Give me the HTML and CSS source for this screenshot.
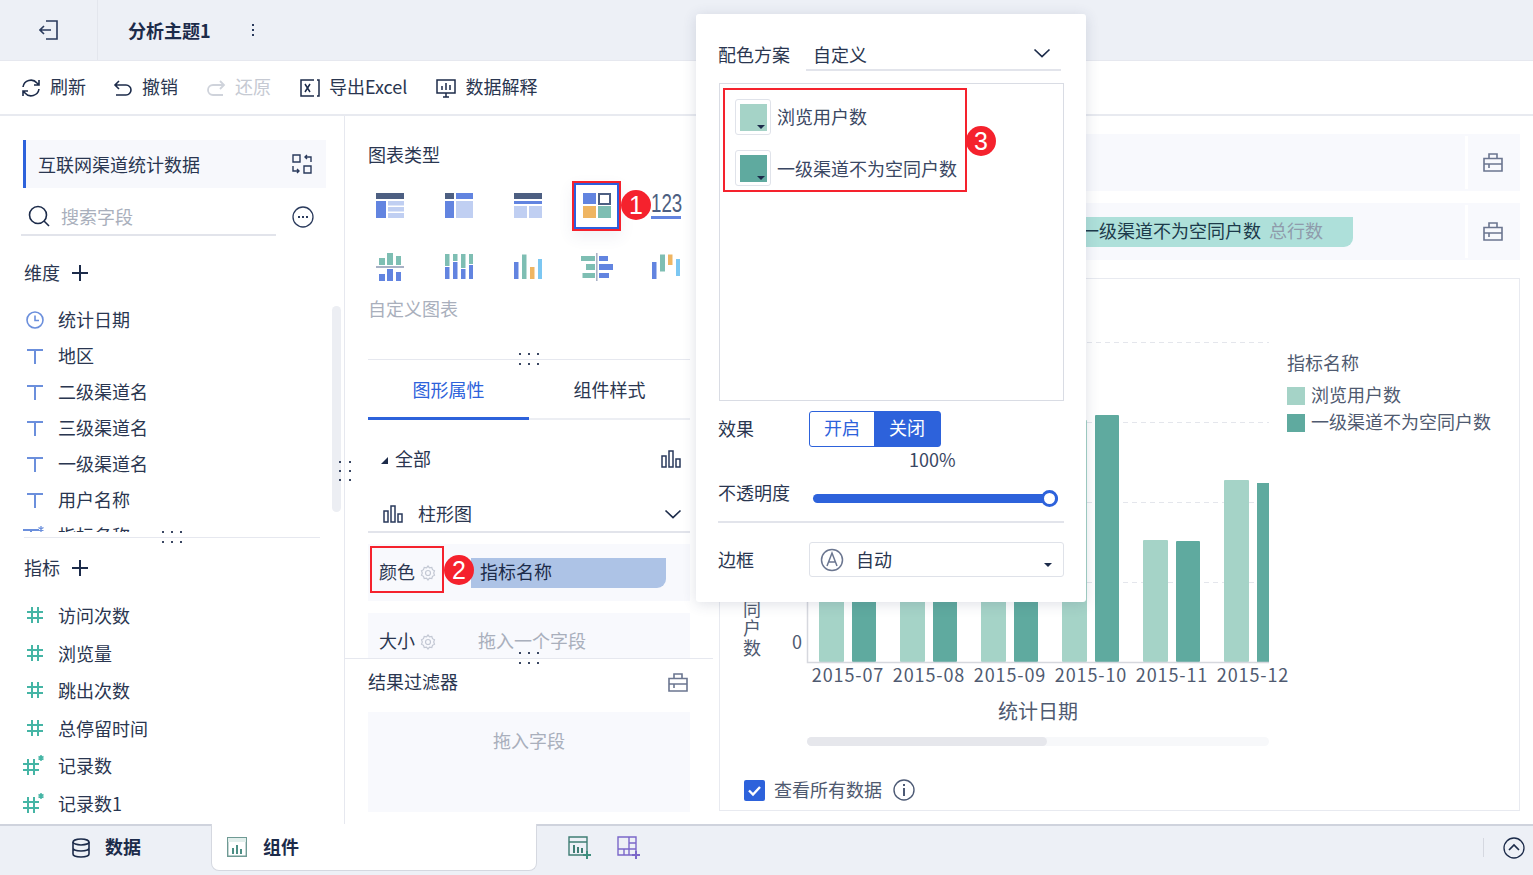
FILE: index.html
```html
<!DOCTYPE html>
<html lang="zh-CN">
<head>
<meta charset="utf-8">
<title>分析主题1</title>
<link rel="stylesheet" href="styles.css">
</head>
<body>
<svg class="defs" aria-hidden="true">
  <symbol id="i-t" viewBox="0 0 18 18"><path d="M1 3h16M9 3v14" fill="none" stroke="#6b8fdc" stroke-width="2"/></symbol>
  <symbol id="i-tx" viewBox="0 0 22 20"><path d="M0 4h16M8 4v16" fill="none" stroke="#6b8fdc" stroke-width="2"/><path d="M18 0v6M15.500 1.500l5 3M20.500 1.500l-5 3" fill="none" stroke="#6b8fdc" stroke-width="1.300"/></symbol>
  <symbol id="i-hash" viewBox="0 0 18 18"><path d="M6 1v16M12 1v16M1 6h16M1 12h16" fill="none" stroke="#45b5a5" stroke-width="2"/></symbol>
  <symbol id="i-hashx" viewBox="0 0 22 20"><path d="M5 4v16M11 4v16M0 9h16M0 15h16" fill="none" stroke="#45b5a5" stroke-width="2"/><path d="M18 0v6M15.500 1.500l5 3M20.500 1.500l-5 3" fill="none" stroke="#45b5a5" stroke-width="1.500"/></symbol>
  <symbol id="i-plus" viewBox="0 0 16 16"><path d="M0 8h16M8 0v16" fill="none" stroke="#1c2b4a" stroke-width="2"/></symbol>
  <symbol id="i-box" viewBox="0 0 20 19"><path d="M1 5.500h18v12.500H1zM6 5.500V1h8v4.500M1 11h18M6 11v4" fill="none" stroke="#6b7690" stroke-width="1.600"/></symbol>
  <symbol id="i-bars" viewBox="0 0 20 18"><path d="M1 6h4v11H1zM8 1h4v16H8zM15 9h4v8h-4z" fill="none" stroke="#2a3a5c" stroke-width="1.500"/></symbol>
  <symbol id="i-gear" viewBox="0 0 16 16"><path d="M8 1l1.500 1.800 2.300-.3.700 2.200 2 1.100-.8 2.200.8 2.200-2 1.100-.7 2.200-2.300-.3L8 15l-1.500-1.800-2.300.3-.7-2.200-2-1.100.8-2.200-.8-2.200 2-1.100.7-2.200 2.300.3z" fill="none" stroke="#c3c8d4" stroke-width="1.200"/><circle cx="8" cy="8" r="2.500" fill="none" stroke="#c3c8d4" stroke-width="1.200"/></symbol>
  <symbol id="i-chev" viewBox="0 0 18 10"><path d="M1.500 1.500L9 8.500l7.500-7" fill="none" stroke="#1c2b4a" stroke-width="1.700"/></symbol>
  <symbol id="i-dots" viewBox="0 0 22 12"><path d="M1 0h2v2H1zM10 0h2v2h-2zM19 0h2v2h-2zM1 10h2v2H1zM10 10h2v2h-2zM19 10h2v2h-2z" fill="#3a4763"/></symbol>
</svg>

<header class="topbar">
  <div class="back">
    <svg class="ico-back" viewBox="0 0 20 20"><path d="M7 1h11v18H7M1 10h11M5 6l-4 4 4 4" fill="none" stroke="#2a3a5c" stroke-width="1.600"/></svg>
  </div>
  <div class="title">分析主题1</div>
  <svg class="ico-more" viewBox="0 0 4 12"><path d="M1 0h2v2H1zM1 5h2v2H1zM1 10h2v2H1z" fill="#2a3a5c"/></svg>
</header>

<nav class="toolbar">
  <div class="tool">
    <svg class="ico-tool" viewBox="0 0 20 20"><path d="M2 9a8 8 0 0 1 14-4l2 2M18 11a8 8 0 0 1-14 4l-2-2M18 2v5h-5M2 18v-5h5" fill="none" stroke="#1c2b4a" stroke-width="1.600"/></svg><span>刷新</span>
  </div>
  <div class="tool">
    <svg class="ico-tool" viewBox="0 0 20 20"><path d="M6 3L2 7l4 4M2 7h11a5 5 0 0 1 0 10H3" fill="none" stroke="#1c2b4a" stroke-width="1.600"/></svg><span>撤销</span>
  </div>
  <div class="tool tool-off">
    <svg class="ico-tool" viewBox="0 0 20 20"><path d="M14 3l4 4-4 4M18 7H7a5 5 0 0 0 0 10h10" fill="none" stroke="#cfd3db" stroke-width="1.800"/></svg><span>还原</span>
  </div>
  <div class="tool tool-xl">
    <svg class="ico-tool" viewBox="0 0 20 20"><path d="M14 2H1v16h13M17 2h2v16h-2M5 6l5 8M10 6l-5 8" fill="none" stroke="#1c2b4a" stroke-width="1.500"/></svg><span>导出Excel</span>
  </div>
  <div class="tool">
    <svg class="ico-tool" viewBox="0 0 20 20"><path d="M1 2h18v13H1zM7 19h6M10 15v4M6 8v4M10 5v7M14 7v5" fill="none" stroke="#1c2b4a" stroke-width="1.500"/></svg><span>数据解释</span>
  </div>
</nav>

<main class="main">
  <aside class="left">
    <div class="dataset">
      <span>互联网渠道统计数据</span>
      <svg class="ico-swap" viewBox="0 0 20 20"><path d="M1 1h7v7H1zM12 12h7v7h-7zM1 12v5h6M5 15l2 2-2 2M19 8V3h-6M15 5l-2-2 2-2" fill="none" stroke="#2a3a5c" stroke-width="1.400"/></svg>
    </div>
    <div class="search">
      <div class="search-box">
        <svg class="ico-search" viewBox="0 0 22 22"><circle cx="10" cy="10" r="8.500" fill="none" stroke="#1c2b4a" stroke-width="1.600"/><path d="M16 16l5 5" stroke="#1c2b4a" stroke-width="1.600"/></svg>
        <span>搜索字段</span>
      </div>
      <svg class="ico-ell" viewBox="0 0 22 22"><circle cx="11" cy="11" r="10" fill="none" stroke="#2a3a5c" stroke-width="1.300"/><path d="M6 10h2v2H6zM10 10h2v2h-2zM14 10h2v2h-2z" fill="#2a3a5c"/></svg>
    </div>
    <div class="sec-head"><span>维度</span><svg class="ico-plus"><use href="#i-plus"/></svg></div>
    <div class="dim-list">
      <div class="row"><svg class="ico-f" viewBox="0 0 18 18"><circle cx="9" cy="9" r="8" fill="none" stroke="#6b8fdc" stroke-width="1.600"/><path d="M9 4.500V9.500h4" fill="none" stroke="#6b8fdc" stroke-width="1.600"/></svg><span>统计日期</span></div>
      <div class="row"><svg class="ico-f"><use href="#i-t"/></svg><span>地区</span></div>
      <div class="row"><svg class="ico-f"><use href="#i-t"/></svg><span>二级渠道名</span></div>
      <div class="row"><svg class="ico-f"><use href="#i-t"/></svg><span>三级渠道名</span></div>
      <div class="row"><svg class="ico-f"><use href="#i-t"/></svg><span>一级渠道名</span></div>
      <div class="row"><svg class="ico-f"><use href="#i-t"/></svg><span>用户名称</span></div>
      <div class="row"><svg class="ico-fx"><use href="#i-tx"/></svg><span>指标名称</span></div>
      <div class="thumb"></div>
    </div>
    <div class="sec-line"><svg class="dots dots-left"><use href="#i-dots"/></svg></div>
    <div class="sec-head sec-head2"><span>指标</span><svg class="ico-plus"><use href="#i-plus"/></svg></div>
    <div class="row row-m"><svg class="ico-f"><use href="#i-hash"/></svg>访问次数</div>
    <div class="row row-m"><svg class="ico-f"><use href="#i-hash"/></svg>浏览量</div>
    <div class="row row-m"><svg class="ico-f"><use href="#i-hash"/></svg>跳出次数</div>
    <div class="row row-m"><svg class="ico-f"><use href="#i-hash"/></svg>总停留时间</div>
    <div class="row row-m"><svg class="ico-fx"><use href="#i-hashx"/></svg>记录数</div>
    <div class="row row-m"><svg class="ico-fx"><use href="#i-hashx"/></svg>记录数1</div>
  </aside>

  <section class="mid">
    <div class="mid-top">
      <div class="heading">图表类型</div>
      <div class="types">
        <div class="type"><svg class="ico-type" viewBox="0 0 28 25"><path fill="#4d5f82" d="M0 0h28v6H0z"/><path fill="#6284e0" d="M0 8h10v17H0z"/><path fill="#c0cff2" d="M12 8h16v4.500H12zM12 14h16v4.500H12zM12 20h16v5H12z"/></svg></div>
        <div class="type"><svg class="ico-type" viewBox="0 0 28 25"><path fill="#4d5f82" d="M0 0h9v6H0z"/><path fill="#6284e0" d="M11 0h17v6H11zM0 8h9v17H0z"/><path fill="#c0cff2" d="M11 8h17v17H11z"/></svg></div>
        <div class="type"><svg class="ico-type" viewBox="0 0 28 25"><path fill="#4d5f82" d="M0 0h28v6H0z"/><path fill="#6284e0" d="M0 8h28v3H0z"/><path fill="#c0cff2" d="M0 13h13v12H0zM15 13h13v12H15z"/></svg></div>
        <div class="type type-on"><svg class="ico-type" viewBox="0 0 28 25"><path fill="#6284e0" d="M0 0h13v11H0z"/><path fill="none" stroke="#4d5f82" stroke-width="2" d="M16 1h11v10H16z"/><path fill="#efb562" d="M0 13h13v12H0z"/><path fill="#7ebeb3" d="M15 13h13v12H15z"/></svg></div>
        <div class="type"><div class="num"><span>123</span></div></div>
        <div class="type"><svg class="ico-type2" viewBox="0 0 28 28"><path fill="#7ebeb3" d="M3 5h6v7H3zM11 0h6v12h-6zM20 3h5v9h-5z"/><path fill="#a9b2c6" d="M0 13h28v2H0z"/><path fill="#6284e0" d="M3 21h6v7H3zM11 16h6v12h-6zM20 19h5v9h-5z"/></svg></div>
        <div class="type"><svg class="ico-type2" viewBox="0 0 28 28"><path fill="#7ebeb3" d="M0 1h4.500v12H0zM8 1h4.500v7H8zM16 1h4.500v14H16zM24 1h4v10h-4z"/><path fill="#6284e0" d="M0 14h4.500v12H0zM8 9h4.500v17H8zM16 16h4.500v10H16zM24 12h4v14h-4z"/></svg></div>
        <div class="type"><svg class="ico-type2" viewBox="0 0 28 28"><path fill="#6284e0" d="M0 9h4.500v17H0z"/><path fill="#7ebeb3" d="M8 1.500h4.500V26H8z"/><path fill="#efb562" d="M16 14h4.500v12H16z"/><path fill="#7cc7f2" d="M24 6h4v20h-4z"/></svg></div>
        <div class="type"><svg class="ico-type3" viewBox="0 0 32 28"><path fill="#a9b2c6" d="M15 0h1.600v28H15z"/><path fill="#7ebeb3" d="M0 3h14v5H0zM5 11h9v6H5zM1.500 20H14v5H1.500z"/><path fill="#6284e0" d="M18 3h9v5h-9zM18 11h14v6H18zM18 20h10v5H18z"/></svg></div>
        <div class="type"><svg class="ico-type2" viewBox="0 0 28 28"><path fill="#6284e0" d="M0 9h4.500v17H0z"/><path fill="#7ebeb3" d="M8 1.500h5v17H8z"/><path fill="#efb562" d="M16 1.500h4.500V12H16z"/><path fill="#7cc7f2" d="M24 6h4v17h-4z"/></svg></div>
      </div>
      <div class="custom">自定义图表</div>
      <div class="divider"><svg class="dots dots-mid"><use href="#i-dots"/></svg></div>
      <div class="tabs">
        <div class="tab tab-on">图形属性</div>
        <div class="tab">组件样式</div>
      </div>
      <div class="all-row">
        <span class="corner"></span><span class="all-text">全部</span>
        <svg class="ico-bars"><use href="#i-bars"/></svg>
      </div>
      <div class="kind-row">
        <svg class="ico-bars"><use href="#i-bars"/></svg><span class="kind-text">柱形图</span>
        <svg class="ico-chev"><use href="#i-chev"/></svg>
      </div>
      <div class="well well-color">
        <div class="well-label well-label-red"><span>颜色</span><svg class="ico-gear"><use href="#i-gear"/></svg></div>
        <div class="pill-blue">指标名称</div>
      </div>
      <div class="well well-size">
        <div class="well-label"><span>大小</span><svg class="ico-gear"><use href="#i-gear"/></svg></div>
        <div class="hint">拖入一个字段</div>
      </div>
    </div>
    <div class="mid-bottom">
      <svg class="dots dots-filter"><use href="#i-dots"/></svg>
      <div class="filter-head"><span>结果过滤器</span><svg class="ico-box"><use href="#i-box"/></svg></div>
      <div class="drop">拖入字段</div>
    </div>
    <b class="badge badge-1">1</b>
    <b class="badge badge-2">2</b>
  </section>

  <section class="right">
    <div class="shelf">
      <div class="shelf-main"></div>
      <div class="shelf-side"><svg class="ico-box"><use href="#i-box"/></svg></div>
    </div>
    <div class="shelf">
      <div class="shelf-main"><div class="pill-teal">一级渠道不为空同户数<span class="muted">总行数</span></div></div>
      <div class="shelf-side"><svg class="ico-box"><use href="#i-box"/></svg></div>
    </div>
    <div class="chart">
      <svg class="plot" viewBox="720 279 799 496">
        <g class="grid">
          <path d="M808 342.500h461M808 422.500h461M808 502.500h461M808 582.500h461"/>
        </g>
        <g class="bar-a">
          <rect x="819" y="420" width="25" height="242" rx="1"/><rect x="900" y="420" width="25" height="242" rx="1"/><rect x="981" y="420" width="25" height="242" rx="1"/><rect x="1062" y="420" width="25" height="242" rx="1"/><rect x="1143" y="540" width="25" height="122" rx="1"/><rect x="1224" y="480" width="25" height="182" rx="1"/>
        </g>
        <g class="bar-b">
          <rect x="852" y="420" width="24" height="242" rx="1"/><rect x="933" y="420" width="24" height="242" rx="1"/><rect x="1014" y="420" width="24" height="242" rx="1"/><rect x="1095" y="415" width="24" height="247" rx="1"/><rect x="1176" y="541" width="24" height="121" rx="1"/><rect x="1257" y="483" width="12" height="179"/>
        </g>
        <path class="axis" d="M807.500 420v242.500H1269"/>
        <text class="t-num" x="797" y="649" text-anchor="middle">0</text>
        <text class="t-v" x="752" y="466">一级渠道不为空同户数</text>
        <g class="t-date" text-anchor="middle">
          <text x="848" y="682">2015-07</text><text x="929" y="682">2015-08</text><text x="1010" y="682">2015-09</text><text x="1091" y="682">2015-10</text><text x="1172" y="682">2015-11</text><text x="1253" y="682">2015-12</text>
        </g>
        <text class="t-axis t-big" x="1038" y="719" text-anchor="middle">统计日期</text>
        <rect class="sb-track" x="807" y="737" width="462" height="9" rx="4.500"/>
        <rect class="sb-thumb" x="807" y="737" width="240" height="9" rx="4.500"/>
        <text class="t-axis" x="1287" y="370">指标名称</text>
        <rect class="sw-a" x="1287" y="387" width="18" height="18"/>
        <text class="t-axis" x="1311" y="402">浏览用户数</text>
        <rect class="sw-b" x="1287" y="414" width="18" height="18"/>
        <text class="t-axis" x="1311" y="429">一级渠道不为空同户数</text>
      </svg>
      <div class="check-row">
        <svg class="ico-check" viewBox="0 0 21 21"><rect width="21" height="21" rx="2" fill="#2d62db"/><path d="M5 10.500l4 4 7-7.500" fill="none" stroke="#fff" stroke-width="2.400"/></svg>
        <span>查看所有数据</span>
        <svg class="ico-info" viewBox="0 0 22 22"><circle cx="11" cy="11" r="10" fill="none" stroke="#4d5a75" stroke-width="1.400"/><path d="M10 5h2v2h-2zM10 9h2v8h-2z" fill="#4d5a75"/></svg>
      </div>
    </div>
  </section>

  <svg class="dots-v" viewBox="0 0 12 22"><path d="M0 1h2v2H0zM0 10h2v2H0zM0 19h2v2H0zM10 1h2v2h-2zM10 10h2v2h-2zM10 19h2v2h-2z" fill="#3a4763"/></svg>

  <div class="popup">
    <div class="p-scheme">
      <span class="p-label">配色方案</span>
      <div class="p-select"><span>自定义</span><svg class="ico-chev"><use href="#i-chev"/></svg></div>
    </div>
    <div class="p-list">
      <div class="p-red">
        <div class="p-item"><div class="sw-wrap"><div class="sw sw-1"></div></div><span>浏览用户数</span></div>
        <div class="p-item"><div class="sw-wrap"><div class="sw sw-2"></div></div><span>一级渠道不为空同户数</span></div>
      </div>
      <b class="badge badge-3">3</b>
    </div>
    <div class="p-effect">
      <span class="p-label">效果</span>
      <div class="toggle"><span class="tg">开启</span><span class="tg tg-on">关闭</span></div>
    </div>
    <div class="p-pct">100%</div>
    <div class="p-opacity">
      <span class="p-label">不透明度</span>
      <div class="slider"><i class="knob"></i></div>
    </div>
    <div class="p-border">
      <span class="p-label">边框</span>
      <div class="b-select">
        <svg class="ico-a" viewBox="0 0 24 24"><circle cx="12" cy="12" r="10.500" fill="none" stroke="#6b7690" stroke-width="1.500"/><path d="M7 18l5-13 5 13M8.500 14h7" fill="none" stroke="#6b7690" stroke-width="1.500"/></svg>
        <span>自动</span>
        <i class="caret"></i>
      </div>
    </div>
  </div>
</main>

<footer class="bottom">
  <div class="b-data">
    <svg class="ico-db" viewBox="0 0 18 20"><ellipse cx="9" cy="4" rx="8" ry="3" fill="none" stroke="#1c2b4a" stroke-width="1.600"/><path d="M1 4v12c0 1.700 3.600 3 8 3s8-1.300 8-3V4M1 10c0 1.700 3.600 3 8 3s8-1.300 8-3" fill="none" stroke="#1c2b4a" stroke-width="1.600"/></svg>
    <strong>数据</strong>
  </div>
  <div class="b-tab">
    <svg class="ico-comp" viewBox="0 0 20 20"><path d="M.7.700h18.600v18.600H.7z" fill="none" stroke="#6f9a94" stroke-width="1.400"/><path d="M1 1h18v4H1z" fill="#e2efec"/><path d="M5 11h2v6H5zM9 8h2v9H9zM13 12h2v5h-2z" fill="#4d8f85"/></svg>
    <strong>组件</strong>
  </div>
  <div class="b-actions">
    <svg class="ico-act" viewBox="0 0 24 24"><path d="M1 1h18v18H1zM1 6h18" fill="none" stroke="#3f7d74" stroke-width="1.400"/><path d="M5 9h2v8H5zM9 11h2v6H9zM13 12h2v5h-2z" fill="#3f7d74"/><path d="M19 15v8M15 19h8" stroke="#3f8e7e" stroke-width="2"/></svg>
    <svg class="ico-act" viewBox="0 0 24 24"><path d="M1 1h18v18H1zM12 1v18M1 13h18M7 13v6M12 7h7" fill="none" stroke="#7b67c9" stroke-width="1.400"/><path d="M19 15v8M15 19h8" stroke="#7b67c9" stroke-width="2"/></svg>
  </div>
  <div class="b-end">
    <svg class="ico-up" viewBox="0 0 22 22"><circle cx="11" cy="11" r="10" fill="none" stroke="#1c2b4a" stroke-width="1.300"/><path d="M6 13l5-5 5 5" fill="none" stroke="#1c2b4a" stroke-width="1.700"/></svg>
  </div>
</footer>
</body>
</html>
```
FILE: styles.css
```css
* { box-sizing: border-box; }
html, body { margin: 0; height: 100%; }
body {
  width: 1533px;
  height: 875px;
  overflow: hidden;
  display: flex;
  flex-direction: column;
  background: #fff;
  color: #2a3650;
  font: 18px/24px "Noto Sans CJK SC", "Liberation Sans", sans-serif;
}
svg { display: block; flex: none; }
.defs { position: absolute; width: 0; height: 0; }

/* top */
.topbar { height: 61px; flex: none; display: flex; align-items: center; background: #edf0f6; border-bottom: 1px solid #e6e8ef; }
.back { width: 98px; height: 60px; border-right: 1px solid #e3e6ed; display: flex; align-items: center; padding-left: 39px; }
.ico-back { width: 20px; height: 20px; }
.title { margin-left: 30px; font-weight: 700; color: #1c2b4a; width: 123px; }
.ico-more { width: 4px; height: 12px; }

.toolbar { height: 55px; flex: none; display: flex; align-items: center; gap: 27px; padding-left: 21px; border-bottom: 2px solid #e8eaf0; }
.tool { display: flex; align-items: center; gap: 9px; }
.tool span { margin-bottom: 4px; }
.ico-tool { width: 20px; height: 20px; }
.tool-off { color: #c6cad3; margin-left: 1px; margin-right: 2px; }
.tool-xl { margin-right: 2px; }

.main { flex: 1; min-height: 0; display: flex; position: relative; }

/* left */
.left { width: 345px; flex: none; border-right: 1px solid #e6e8ef; padding-top: 24px; position: relative; overflow: hidden; }
.dataset { margin-left: 23px; width: 303px; height: 48px; background: #f7f8fc; border-left: 3px solid #2d62db; display: flex; align-items: center; justify-content: space-between; padding: 0 14px 0 12px; }
.ico-swap { width: 20px; height: 20px; }
.search { display: flex; align-items: center; margin: 10px 0 0 21px; height: 38px; }
.search-box { width: 255px; height: 38px; border-bottom: 2px solid #e2e4eb; display: flex; align-items: center; gap: 11px; padding-left: 7px; color: #a9afbc; }
.ico-search { width: 22px; height: 22px; }
.ico-ell { width: 22px; height: 22px; margin-left: 16px; }
.sec-head { height: 36px; margin: 19px 0 0 24px; display: flex; align-items: center; gap: 12px; }
.sec-head span { margin-bottom: 2px; }
.sec-head2 { margin-top: 12px; margin-bottom: 10.500px; }
.ico-plus { width: 16px; height: 16px; }
.dim-list { height: 230px; margin-top: 11px; overflow: hidden; position: relative; }
.row { height: 36px; display: flex; align-items: center; padding-left: 26px; gap: 14px; }
.row span { margin-bottom: 2px; }
.row-m { height: 37.500px; }
.ico-f { width: 18px; height: 18px; }
.ico-fx { width: 22px; height: 20px; margin-left: -3px; margin-right: -1px; }
.thumb { position: absolute; left: 332px; top: 4px; width: 9px; height: 206px; border-radius: 5px; background: #eceef3; }
.sec-line { margin: 5px 0 0 24px; width: 296px; height: 1px; background: #e6e8ef; position: relative; }
.dots { position: absolute; width: 22px; height: 12px; }
.dots-left { left: 137px; top: -6px; }
.dots-v { position: absolute; left: 339px; top: 344px; width: 12px; height: 22px; z-index: 1; }

/* middle */
.mid { width: 368px; flex: none; display: flex; flex-direction: column; position: relative; }
.mid-top { height: 542px; flex: none; padding: 27px 23px 0; overflow: hidden; }
.heading { height: 24px; line-height: 22px; }
.types { display: grid; grid-template-columns: repeat(5, 69px); grid-auto-rows: 61px; margin: 8px 0 0 -13px; }
.type { display: flex; align-items: center; justify-content: center; }
.type-on { width: 49px; height: 50px; margin: auto; border: 2px solid #f5222d; box-shadow: inset 0 0 0 2px #2d5fdc, 0 6px 14px rgba(60,80,130,.08); }
.ico-type { width: 28px; height: 25px; }
.ico-type2 { width: 28px; height: 28px; }
.ico-type3 { width: 32px; height: 28px; }
.num { width: 30px; height: 26px; border-bottom: 3px solid #6284e0; color: #4d5f82; font: 26px/20px "Liberation Sans", sans-serif; }
.num span { display: block; width: 42px; transform: scaleX(.72); transform-origin: 0 0; }
.custom { height: 24px; line-height: 22px; color: #a9afbc; }
.divider { margin-top: 38px; height: 1px; background: #e6e8ef; position: relative; }
.dots-mid { left: 150px; top: -6px; }
.tabs { display: flex; height: 60px; border-bottom: 2px solid #eceef3; }
.tab { width: 161px; height: 60px; text-align: center; line-height: 58px; }
.tab-on { color: #2d62db; border-bottom: 3px solid #2d62db; }
.all-row { height: 38px; margin-top: 20px; display: flex; align-items: center; padding: 0 9px 0 13px; }
.corner { width: 0; height: 0; border-style: solid; border-width: 0 0 7px 7px; border-color: transparent transparent #1c2b4a transparent; margin-top: 2px; }
.all-text { margin: 0 0 2px 7px; flex: 1; }
.ico-bars { width: 20px; height: 18px; }
.kind-row { height: 37px; margin-top: 18px; display: flex; align-items: center; padding: 0 8px 0 15px; border-bottom: 2px solid #e2e4eb; }
.kind-text { margin: 0 0 2px 15px; flex: 1; }
.ico-chev { width: 18px; height: 10px; }
.well { background: #f8f9fd; display: flex; align-items: flex-start; }
.well-color { height: 57px; margin-top: 11px; padding: 2px 0 0 2px; }
.well-size { height: 60px; margin-top: 12px; padding: 16px 0 0 11px; }
.well-label { display: flex; align-items: center; gap: 5px; height: 24px; }
.well-label span { margin-bottom: 2px; }
.well-label-red { width: 74px; height: 47px; border: 2px solid #f5222d; padding: 4px 0 0 7px; }
.ico-gear { width: 16px; height: 16px; margin-top: 2px; }
.pill-blue { margin: 12px 0 0 27px; width: 195px; height: 30px; line-height: 26px; padding-left: 9px; background: #adc3e6; border-bottom-right-radius: 9px; color: #1c2b4a; }
.hint { margin-left: 42px; line-height: 22px; color: #a9afbc; }
.mid-bottom { flex: 1; border-top: 1px solid #e6e8ef; padding: 11px 25px 0 23px; position: relative; }
.dots-filter { left: 173px; top: -7px; }
.filter-head { height: 24px; display: flex; align-items: center; justify-content: space-between; }
.filter-head span { margin-bottom: 2px; }
.ico-box { width: 20px; height: 19px; }
.drop { margin-top: 18px; margin-right: -2px; height: 100px; background: #f8f9fd; color: #a9afbc; text-align: center; padding-top: 16px; }

.badge { position: absolute; width: 30px; height: 30px; border-radius: 50%; background: #f5222d; color: #fff; font: 25px/30px "Liberation Sans", sans-serif; text-align: center; z-index: 3; }
.badge-1 { left: 276px; top: 74px; }
.badge-2 { left: 99px; top: 439px; }
.badge-3 { left: 246px; top: 42px; }

/* right */
.right { flex: 1; min-width: 0; padding: 18px 13px 13px 6px; display: flex; flex-direction: column; gap: 12px; }
.shelf { height: 57px; flex: none; display: flex; background: #f8f9fd; margin-left: -6px; }
.shelf-main { flex: 1; display: flex; align-items: center; padding-left: 357px; }
.shelf-side { width: 55px; border-left: 3px solid #fff; display: flex; align-items: center; justify-content: center; margin: 2px 0; padding-right: 2px; }
.pill-teal { width: 283px; height: 30px; line-height: 26px; padding-left: 11px; background: #aee0da; border-bottom-right-radius: 9px; color: #1c3a4a; white-space: nowrap; }
.muted { margin-left: 8px; color: #8f9bab; }
.chart { flex: 1; margin-top: 6px; border: 1px solid #e8eaf0; }
.plot { width: 799px; height: 496px; }
.grid path { fill: none; stroke: #e4e6ec; stroke-dasharray: 5 4; }
.bar-a rect, .sw-a { fill: #a5d3c7; }
.bar-b rect, .sw-b { fill: #5faa9f; }
.axis { fill: none; stroke: #d6d8de; stroke-width: 1.500; }
.t-num, .t-date text, .t-axis, .t-v { fill: #4f5a70; font-size: 18px; }
.t-axis.t-big { font-size: 20px; }
.t-date text { letter-spacing: .9px; }
.t-v { writing-mode: vertical-rl; letter-spacing: 1.200px; }
.sb-track { fill: #f7f8fa; }
.sb-thumb { fill: #e6e7ec; }
.check-row { display: flex; align-items: center; margin: 0 0 0 24px; height: 30px; color: #4f5a70; }
.check-row span { margin-bottom: 2px; }
.ico-check { width: 21px; height: 21px; margin-right: 9px; }
.ico-info { width: 22px; height: 22px; margin-left: 11px; }

/* popup */
.popup { position: absolute; left: 696px; top: -102px; width: 390px; height: 588px; background: #fff; border-radius: 3px; box-shadow: 0 2px 14px rgba(50,65,100,.16); padding: 0 22px; z-index: 2; }
.p-label { width: 91px; flex: none; color: #2a3650; }
.p-scheme { display: flex; align-items: flex-start; padding-top: 29px; height: 69px; line-height: 22px; }
.p-select { margin-left: -3px; width: 255px; height: 28px; border-bottom: 2px solid #e2e4eb; display: flex; justify-content: space-between; padding: 0 10px 0 7px; }
.p-select .ico-chev { margin-top: 5px; }
.p-list { width: 345px; height: 318px; margin: 0 0 0 1px; border: 1px solid #d9dce4; padding: 4px 0 0 3px; position: relative; }
.p-red { width: 244px; height: 104px; border: 2px solid #f5222d; padding: 9px 0 0 10px; display: flex; flex-direction: column; gap: 15px; }
.p-item { display: flex; align-items: center; gap: 6px; height: 36px; white-space: nowrap; color: #3a4763; }
.p-item:first-child span { margin-bottom: 2px; }
.sw-wrap { width: 36px; height: 36px; border: 1px solid #e0e3ea; border-radius: 3px; padding: 4px; flex: none; }
.sw { width: 27px; height: 27px; position: relative; }
.sw-1 { background: #a5d3c7; }
.sw-2 { background: #5faa9f; }
.sw::after { content: ""; position: absolute; right: 2px; bottom: 2px; border-style: solid; border-width: 4px 4px 0; border-color: #1c2b4a transparent transparent; }
.p-effect { display: flex; align-items: center; height: 36px; margin-top: 10px; }
.p-effect .p-label { margin-bottom: 2px; }
.toggle { display: flex; width: 132px; height: 36px; border: 1px solid #2d62db; border-radius: 3px; }
.tg { width: 64px; text-align: center; line-height: 31px; color: #2d62db; }
.tg-on { width: 66px; background: #2d62db; color: #fff; }
.p-pct { height: 24px; line-height: 22px; margin-top: 1px; padding-left: 191px; color: #3a4763; }
.p-opacity { display: flex; height: 51px; border-bottom: 2px solid #e2e4eb; width: 346px; padding-top: 9px; line-height: 22px; }
.slider { width: 245px; height: 9px; margin: 13px 0 0 4px; border-radius: 5px; background: #2d62db; position: relative; }
.knob { position: absolute; right: 0; top: -4px; width: 17px; height: 17px; border-radius: 50%; background: #fff; border: 3px solid #2d62db; }
.p-border { display: flex; align-items: center; margin-top: 19px; height: 35px; }
.p-border span { margin-bottom: 2px; }
.b-select { width: 255px; height: 35px; border: 1px solid #dfe2e9; border-radius: 3px; display: flex; align-items: center; padding-left: 10px; gap: 12px; position: relative; }
.ico-a { width: 24px; height: 24px; }
.caret { position: absolute; right: 11px; bottom: 9px; border-style: solid; border-width: 4px 4px 0; border-color: #1c2b4a transparent transparent; }

/* bottom */
.bottom { height: 51px; flex: none; background: #edf0f6; border-top: 2px solid #cfd3dd; display: flex; }
.b-data { width: 211px; height: 44px; display: flex; align-items: center; gap: 15px; padding-left: 72px; }
.b-data strong { margin-bottom: 4px; color: #1c2b4a; }
.b-tab strong { margin-bottom: 2px; color: #1c2b4a; }
.ico-db { width: 18px; height: 20px; }
.b-tab { width: 326px; height: 47px; margin-top: -2px; background: #fff; border: 1px solid #d5d8e0; border-top: 0; border-radius: 0 0 8px 8px; display: flex; align-items: center; gap: 16px; padding-left: 15px; }
.ico-comp { width: 20px; height: 20px; }
.b-actions { display: flex; gap: 25px; margin-left: 31px; align-items: center; height: 44px; }
.ico-act { width: 24px; height: 24px; }
.b-end { margin-left: auto; width: 50px; height: 19px; margin-top: 12px; border-left: 1px solid #d5d8e0; display: flex; align-items: center; padding-left: 19px; }
.ico-up { width: 22px; height: 22px; flex: none; }
```
